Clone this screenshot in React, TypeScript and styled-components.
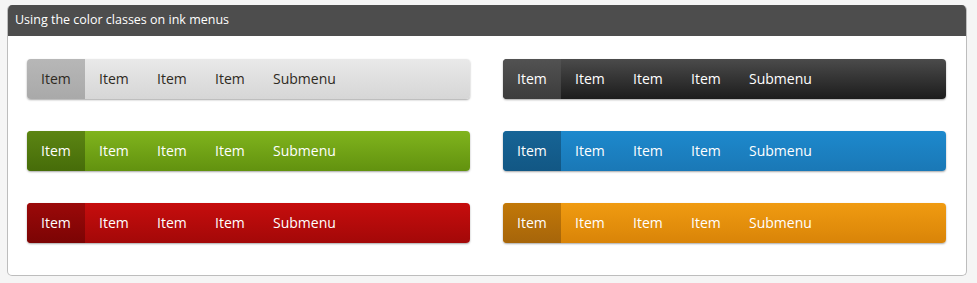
import React from 'react';
import styled, { createGlobalStyle } from 'styled-components';

const GlobalStyle = createGlobalStyle`
	html, body {
		margin: 0;
		padding: 0;
		background: #f5f5f5;
		font-family: 'Open Sans', 'Liberation Sans', sans-serif;
	}
`;

type Tone = {
	top: string;
	bottom: string;
	activeTop: string;
	activeBottom: string;
	text: string;
};

const tones: Record<string, Tone> = {
	grey: { top: '#e9e9e9', bottom: '#d6d6d6', activeTop: '#b7b7b7', activeBottom: '#a9a9a9', text: '#2e2a22' },
	black: { top: '#4b4b4b', bottom: '#1c1c1c', activeTop: '#525252', activeBottom: '#3c3c3c', text: '#ffffff' },
	green: { top: '#80b41d', bottom: '#62920f', activeTop: '#5c8513', activeBottom: '#466c09', text: '#ffffff' },
	blue: { top: '#1d89cd', bottom: '#1a78b6', activeTop: '#166496', activeBottom: '#125784', text: '#ffffff' },
	red: { top: '#c60d0d', bottom: '#a30808', activeTop: '#9b0909', activeBottom: '#7b0404', text: '#ffffff' },
	orange: { top: '#f09b11', bottom: '#d98408', activeTop: '#c27808', activeBottom: '#a6650a', text: '#ffffff' },
};

const Panel = styled.section`
	margin: 5px 10px 0 7px;
	background: #ffffff;
	border: 1px solid #bdbdbd;
	border-top: none;
	border-radius: 5px;
	overflow: hidden;
`;

const PanelHeader = styled.h2`
	margin: 0;
	height: 31px;
	line-height: 29px;
	padding: 0 7px;
	background: #4d4d4d;
	color: #ffffff;
	font-size: 12.5px;
	font-weight: 400;
`;

const Grid = styled.div`
	display: grid;
	grid-template-columns: 1fr 1fr;
	column-gap: 33px;
	row-gap: 32px;
	padding: 23px 20px 32px 19px;
`;

const Menu = styled.ul<{ $tone: Tone }>`
	display: flex;
	margin: 0;
	padding: 0;
	list-style: none;
	height: 40px;
	border-radius: 4px;
	overflow: hidden;
	background: linear-gradient(${(p) => p.$tone.top}, ${(p) => p.$tone.bottom});
	box-shadow: 0 1px 2px rgba(0, 0, 0, 0.35);
`;

const MenuItem = styled.li<{ $tone: Tone; $active?: boolean; $wide?: boolean }>`
	display: flex;
	align-items: center;
	box-sizing: border-box;
	width: ${(p) => (p.$wide ? 'auto' : '58px')};
	padding: 0 14px 2px;
	font-size: 14px;
	color: ${(p) => p.$tone.text};
	background: ${(p) =>
		p.$active
			? `linear-gradient(${p.$tone.activeTop}, ${p.$tone.activeBottom})`
			: 'transparent'};
	cursor: pointer;
`;

const order = ['grey', 'black', 'green', 'blue', 'red', 'orange'];

const App: React.FC = () => {
	return (
		<>
			<GlobalStyle />
			<Panel>
				<PanelHeader>Using the color classes on ink menus</PanelHeader>
				<Grid>
					{order.map((name) => {
						const tone = tones[name];
						return (
							<Menu key={name} $tone={tone}>
								<MenuItem $tone={tone} $active>
									Item
								</MenuItem>
								<MenuItem $tone={tone}>Item</MenuItem>
								<MenuItem $tone={tone}>Item</MenuItem>
								<MenuItem $tone={tone}>Item</MenuItem>
								<MenuItem $tone={tone} $wide>
									Submenu
								</MenuItem>
							</Menu>
						);
					})}
				</Grid>
			</Panel>
		</>
	);
};

export default App;
